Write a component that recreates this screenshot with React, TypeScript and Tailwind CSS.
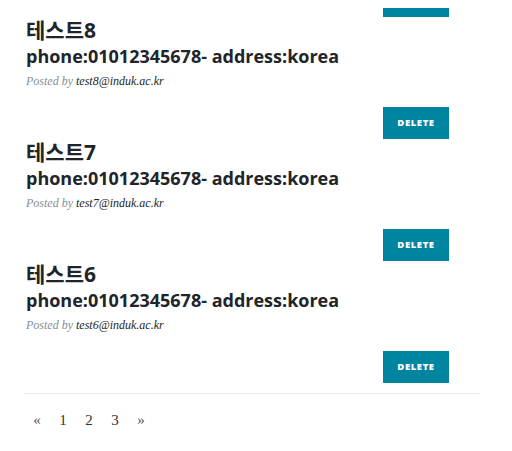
import React from "react";

const posts = [
  { title: "테스트8", email: "test8@induk.ac.kr" },
  { title: "테스트7", email: "test7@induk.ac.kr" },
  { title: "테스트6", email: "test6@induk.ac.kr" },
];

const sans = "font-['Open_Sans','Noto_Sans_CJK_KR',sans-serif]";

function DeleteButton() {
  return (
    <div className="flex justify-end pr-[31px]">
      <button
        className={`w-[66px] h-[32px] bg-[#0085a1] text-white ${sans} text-[9.5px] font-extrabold tracking-[0.6px] uppercase flex items-center justify-center`}
      >
        Delete
      </button>
    </div>
  );
}

export default function App() {
  return (
    <div className="w-[512px] h-[451px] bg-white overflow-hidden">
      <div className="ml-[24px] w-[456px]">
        <div className="flex justify-end pr-[31px] pt-[8px]">
          <div className="w-[66px] h-[9px] bg-[#0085a1]" />
        </div>
        {posts.map((p) => (
          <div key={p.title}>
            <div className="pl-[2px]">
              <h2 className={`${sans} pt-[2px] text-[21px] leading-[22px] font-bold text-[#212529]`}>
                {p.title}
              </h2>
              <h3 className={`${sans} mt-[3px] text-[18px] leading-[24px] font-bold text-[#212529] whitespace-nowrap`}>
                phone:01012345678- address:korea
              </h3>
              <p className="mt-[4px] font-['Liberation_Serif',serif] italic text-[12px] leading-[18px] text-[#868e96]">
                Posted by <span className="text-[#212529]">{p.email}</span>
              </p>
            </div>
            <div className="mt-[17px]">
              <DeleteButton />
            </div>
          </div>
        ))}
        <div className="mt-[10px] border-t border-[#e9ecef]" />
        <div className="mt-[16px] flex font-['Liberation_Serif',serif] text-[15px] leading-[20px] text-[#333]">
          <span className="w-[26px] text-center text-[#555]">«</span>
          <span className="w-[26px] text-center">1</span>
          <span className="w-[26px] text-center">2</span>
          <span className="w-[26px] text-center">3</span>
          <span className="w-[26px] text-center text-[#555]">»</span>
        </div>
      </div>
    </div>
  );
}
